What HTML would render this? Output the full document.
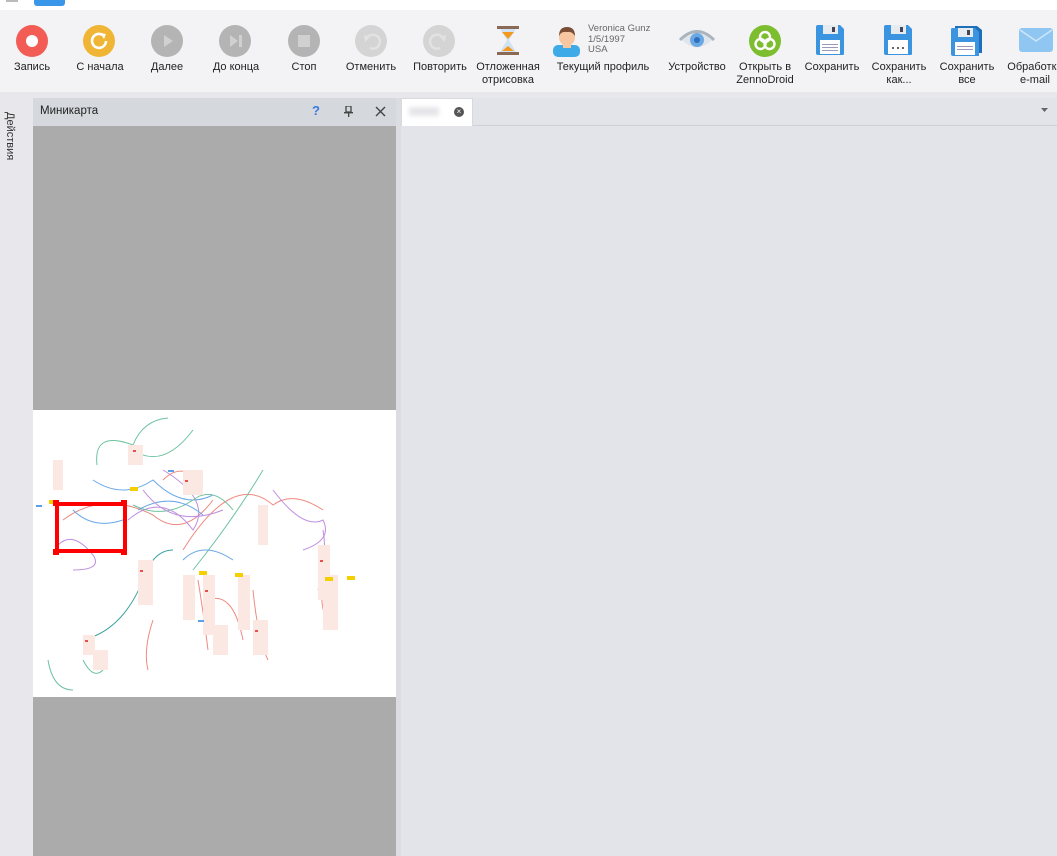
<!DOCTYPE html>
<html><head><meta charset="utf-8"><style>
*{margin:0;padding:0;box-sizing:border-box}
body{width:1057px;height:856px;overflow:hidden;background:#e3e4ea;font-family:"Liberation Sans","Noto Sans CJK SC",sans-serif;font-size:11px;color:#222;position:relative}
.abs{position:absolute}
.tb{left:0;top:10px;width:1057px;height:82px;background:#f3f3f6}
.lbl{position:absolute;top:61px;text-align:center;line-height:13px;white-space:nowrap;transform:translateX(-50%);font-size:11px}
.circ{position:absolute;top:25px;width:32px;height:32px;border-radius:50%}
</style></head><body>
<div class="abs" style="left:0;top:0;width:1057px;height:10px;background:#fff"></div>
<div class="abs" style="left:34px;top:0;width:31px;height:6px;background:#3a96e8;border-radius:0 0 3px 3px"></div>
<div class="abs" style="left:6px;top:0;width:12px;height:2px;background:#bbb"></div>
<div class="abs tb"></div>

<div class="circ" style="left:16px;background:#f25c55"><div class="abs" style="left:10px;top:10px;width:12px;height:12px;border-radius:50%;background:#fff"></div></div>
<div class="circ" style="left:83px;background:#f0b534"><svg width="32" height="32" class="abs" style="left:0;top:0"><path d="M21 11 A7 7 0 1 0 23 16" fill="none" stroke="#fff" stroke-width="2.6"/><path d="M17 8 L23 9 L21 14 Z" fill="#fff"/></svg></div>
<div class="circ" style="left:151px;background:#b4b4b4"><svg width="32" height="32" class="abs"><path d="M13 10 L22 16 L13 22 Z" fill="#d0d0d0"/></svg></div>
<div class="circ" style="left:219px;background:#b4b4b4"><svg width="32" height="32" class="abs"><path d="M11 10 L19 16 L11 22 Z" fill="#d0d0d0"/><rect x="20" y="10" width="3" height="12" fill="#d0d0d0"/></svg></div>
<div class="circ" style="left:288px;background:#b4b4b4"><div class="abs" style="left:10px;top:10px;width:12px;height:12px;background:#d0d0d0"></div></div>
<div class="circ" style="left:355px;background:#d4d4d4"><svg width="32" height="32" class="abs"><path d="M12 13 A7 7 0 1 1 15 23" fill="none" stroke="#e2e2e2" stroke-width="2.5"/><path d="M9 10 L15 12 L10 17Z" fill="#e2e2e2"/></svg></div>
<div class="circ" style="left:423px;background:#d4d4d4"><svg width="32" height="32" class="abs"><path d="M20 13 A7 7 0 1 0 17 23" fill="none" stroke="#e2e2e2" stroke-width="2.5"/><path d="M23 10 L17 12 L22 17Z" fill="#e2e2e2"/></svg></div>
<svg class="abs" style="left:496px;top:26px" width="24" height="30"><rect x="1" y="0" width="22" height="3" fill="#8a6a55"/><rect x="1" y="26" width="22" height="3" fill="#8a6a55"/><path d="M4 3 L20 3 L13 14 L20 26 L4 26 L11 14Z" fill="#cfe3f5"/><path d="M6 6 L18 6 L12 13Z" fill="#f39a1e"/><path d="M6 25 L18 25 L12 20Z" fill="#f39a1e"/></svg>
<svg class="abs" style="left:552px;top:25px" width="30" height="32"><rect x="1" y="20" width="27" height="12" rx="5" fill="#3eabe8"/><rect x="11" y="17" width="8" height="6" fill="#f8c6a0"/><ellipse cx="15" cy="12" rx="8" ry="9" fill="#f8c6a0"/><path d="M7 11 Q7 2 15 2 Q23 2 23 11 Q20 6 15 7 Q9 6 7 11Z" fill="#7a4e35"/></svg>
<div class="abs" style="left:588px;top:24px;font-size:9.5px;line-height:10.5px;color:#666">Veronica Gunz<br>1/5/1997<br>USA</div>
<svg class="abs" style="left:679px;top:27px" width="36" height="26"><path d="M1 13 Q18 -4 35 13" fill="none" stroke="#aab4be" stroke-width="3"/><path d="M3 13 Q18 28 33 13 Q18 0 3 13Z" fill="#dfe5ea"/><circle cx="18" cy="13" r="7" fill="#6aa8e3"/><circle cx="18" cy="13" r="3" fill="#2b6fbe"/></svg>
<div class="circ" style="left:749px;background:#7dbd30"><svg width="32" height="32" class="abs"><circle cx="16" cy="12" r="5" fill="none" stroke="#fff" stroke-width="2.4"/><circle cx="11.5" cy="19" r="5" fill="none" stroke="#fff" stroke-width="2.4"/><circle cx="20.5" cy="19" r="5" fill="none" stroke="#fff" stroke-width="2.4"/></svg></div>
<svg class="abs" style="left:816px;top:25px" width="30" height="31"><path d="M0 2 Q0 0 2 0 L24 0 L28 4 L28 29 Q28 30 26 30 L2 30 Q0 30 0 28Z" fill="#3a94e0"/><rect x="7" y="0" width="15" height="9" fill="#e6ebef"/><rect x="16" y="2" width="3" height="5" fill="#445"/><rect x="4" y="15" width="20" height="14" fill="#fff"/><rect x="6" y="19" width="16" height="1" fill="#99b"/><rect x="6" y="22" width="16" height="1" fill="#99b"/><rect x="6" y="25" width="16" height="1" fill="#99b"/></svg>
<svg class="abs" style="left:884px;top:25px" width="30" height="31"><path d="M0 2 Q0 0 2 0 L24 0 L28 4 L28 29 Q28 30 26 30 L2 30 Q0 30 0 28Z" fill="#3a94e0"/><rect x="7" y="0" width="15" height="9" fill="#e6ebef"/><rect x="16" y="2" width="3" height="5" fill="#445"/><rect x="4" y="15" width="20" height="14" fill="#fff"/><rect x="8" y="22" width="2" height="2" fill="#666"/><rect x="13" y="22" width="2" height="2" fill="#666"/><rect x="18" y="22" width="2" height="2" fill="#666"/></svg>
<svg class="abs" style="left:951px;top:25px" width="32" height="32"><path d="M4 1 L26 1 L31 5 L31 28 L4 28Z" fill="#1c6fb8"/><path d="M0 4 Q0 3 2 3 L24 3 L28 7 L28 31 L2 31 Q0 31 0 29Z" fill="#3a94e0"/><rect x="7" y="3" width="15" height="9" fill="#e6ebef"/><rect x="16" y="5" width="3" height="5" fill="#445"/><rect x="4" y="17" width="20" height="13" fill="#fff"/><rect x="6" y="21" width="16" height="1" fill="#99b"/><rect x="6" y="24" width="16" height="1" fill="#99b"/></svg>
<svg class="abs" style="left:1019px;top:28px" width="38" height="26"><rect x="0" y="0" width="34" height="24" rx="3" fill="#8fc7f2"/><path d="M1 2 L17 13 L33 2" fill="none" stroke="#cfe6f8" stroke-width="1.5"/></svg>

<div class="lbl" style="left:32px">Запись</div>
<div class="lbl" style="left:100px">С начала</div>
<div class="lbl" style="left:167px">Далее</div>
<div class="lbl" style="left:236px">До конца</div>
<div class="lbl" style="left:304px">Стоп</div>
<div class="lbl" style="left:371px">Отменить</div>
<div class="lbl" style="left:440px">Повторить</div>
<div class="lbl" style="left:508px">Отложенная<br>отрисовка</div>
<div class="lbl" style="left:603px">Текущий профиль</div>
<div class="lbl" style="left:697px">Устройство</div>
<div class="lbl" style="left:765px">Открыть в<br>ZennoDroid</div>
<div class="lbl" style="left:832px">Сохранить</div>
<div class="lbl" style="left:899px">Сохранить<br>как...</div>
<div class="lbl" style="left:967px">Сохранить<br>все</div>
<div class="lbl" style="left:1035px">Обработка<br>e-mail</div>

<div class="abs" style="left:0;top:92px;width:1057px;height:6px;background:#e8e8ec"></div>
<div class="abs" style="left:0;top:92px;width:33px;height:764px;background:#e8e8ec"></div>
<div class="abs" style="left:4px;top:112px;writing-mode:vertical-rl;font-size:11px;color:#333">Действия</div>
<div class="abs" style="left:33px;top:98px;width:363px;height:28px;background:#d5d8dd"></div>
<div class="abs" style="left:40px;top:105px;font-size:11.5px;color:#222">Миникарта</div>
<div class="abs" style="left:312px;top:103px;font-size:13px;color:#3b7ae0;font-weight:bold">?</div>
<svg class="abs" style="left:344px;top:106px" width="10" height="12"><rect x="2" y="0" width="5" height="6" fill="none" stroke="#444" stroke-width="1.3"/><rect x="0" y="6" width="9" height="1.4" fill="#444"/><rect x="4" y="7" width="1.3" height="4" fill="#444"/></svg>
<svg class="abs" style="left:375px;top:106px" width="11" height="11"><path d="M1 1L10 10M10 1L1 10" stroke="#444" stroke-width="1.4"/></svg>
<div class="abs" style="left:33px;top:126px;width:363px;height:730px;background:#ababab"></div>
<div class="abs" style="left:33px;top:410px;width:363px;height:287px;background:#fff"></div>
<div class="abs" style="left:396px;top:98px;width:5px;height:758px;background:#dcdde2"></div>
<div class="abs" style="left:401px;top:125px;width:656px;height:1px;background:#d0d1d6"></div>
<div class="abs" style="left:401px;top:98px;width:72px;height:28px;background:#fff;border:1px solid #d8d8dd;border-bottom:none"></div>
<div class="abs" style="left:409px;top:107px;width:30px;height:9px;background:#e6e6ea;filter:blur(2px)"></div>
<div class="abs" style="left:454px;top:107px;width:10px;height:10px;border-radius:50%;background:#555;color:#fff;font-size:8px;line-height:10px;text-align:center">×</div>
<svg class="abs" style="left:1041px;top:108px" width="7" height="5"><path d="M0 0L7 0L3.5 4Z" fill="#666"/></svg>

<svg class="abs" style="left:33px;top:410px" width="363" height="287">
<g fill="none" stroke-width="1">
<path d="M64 55 Q60 20 100 35 Q110 10 135 8" stroke="#6fc2a0"/>
<path d="M100 40 Q130 60 160 20" stroke="#6fc2a0"/>
<path d="M60 70 Q90 90 120 70 Q150 100 180 85" stroke="#6aa8e8"/>
<path d="M30 110 Q70 80 120 105 Q150 130 180 90" stroke="#e88a80"/>
<path d="M95 110 Q130 80 160 120 Q180 90 130 60" stroke="#c08de0"/>
<path d="M150 140 Q200 60 240 95 Q260 80 290 100" stroke="#f08a80"/>
<path d="M160 160 Q200 110 230 60" stroke="#6fc2a0"/>
<path d="M50 230 Q90 220 110 170 Q120 140 140 140" stroke="#3aa0a0"/>
<path d="M240 80 Q270 120 290 110 Q300 130 270 140" stroke="#c08de0"/>
<path d="M290 120 Q295 150 285 180" stroke="#c08de0"/>
<path d="M165 170 Q170 200 175 240 M175 190 Q200 180 210 230" stroke="#f08a80"/>
<path d="M220 180 Q225 230 235 250" stroke="#f08a80"/>
<path d="M25 135 Q40 120 60 145 Q70 160 40 160" stroke="#c08de0"/>
<path d="M120 210 Q110 240 115 260" stroke="#f08a80"/>
<path d="M15 250 Q20 280 40 280 M50 250 Q60 270 70 260" stroke="#6fc2a0"/>
<path d="M290 175 Q285 200 300 220" stroke="#f08a80"/>
<path d="M100 95 Q130 110 160 90 Q180 75 200 100" stroke="#6fc2a0"/>
<path d="M105 100 Q140 80 170 105" stroke="#6aa8e8"/>
<path d="M110 80 Q140 120 190 100" stroke="#c08de0"/>
<path d="M40 100 Q60 120 90 110" stroke="#6aa8e8"/>
<path d="M130 70 Q150 50 170 75" stroke="#f08a80"/>
<path d="M150 150 Q170 130 200 150" stroke="#6aa8e8"/>
</g>
<g fill="#fbe8e2">
<rect x="95" y="35" width="15" height="20"/><rect x="150" y="60" width="20" height="25"/><rect x="225" y="95" width="10" height="40"/><rect x="105" y="150" width="15" height="45"/><rect x="150" y="165" width="12" height="45"/><rect x="170" y="165" width="12" height="60"/><rect x="205" y="165" width="12" height="55"/><rect x="285" y="135" width="12" height="55"/><rect x="50" y="225" width="12" height="20"/><rect x="60" y="240" width="15" height="20"/><rect x="290" y="165" width="15" height="55"/><rect x="180" y="215" width="15" height="30"/><rect x="220" y="210" width="15" height="35"/><rect x="20" y="50" width="10" height="30"/></g>
<g fill="#e85050"><rect x="100" y="40" width="3" height="2"/><rect x="152" y="70" width="3" height="2"/><rect x="107" y="160" width="3" height="2"/><rect x="172" y="180" width="3" height="2"/><rect x="287" y="150" width="3" height="2"/><rect x="52" y="230" width="3" height="2"/><rect x="222" y="220" width="3" height="2"/></g>
<g fill="#5aa0e8"><rect x="135" y="60" width="6" height="2"/><rect x="165" y="210" width="6" height="2"/><rect x="3" y="95" width="6" height="2"/></g>
<g fill="#f5d000"><rect x="97" y="77" width="8" height="4"/><rect x="166" y="161" width="8" height="4"/><rect x="202" y="163" width="8" height="4"/><rect x="292" y="167" width="8" height="4"/><rect x="314" y="166" width="8" height="4"/><rect x="16" y="90" width="8" height="4"/></g>
<g fill="none" stroke="#ff0000" stroke-width="4"><rect x="24" y="94" width="68" height="47"/></g>
<g fill="#ff0000"><rect x="20" y="90" width="6" height="6"/><rect x="88" y="90" width="6" height="6"/><rect x="20" y="139" width="6" height="6"/><rect x="88" y="139" width="6" height="6"/></g>
</svg>
</body></html>
